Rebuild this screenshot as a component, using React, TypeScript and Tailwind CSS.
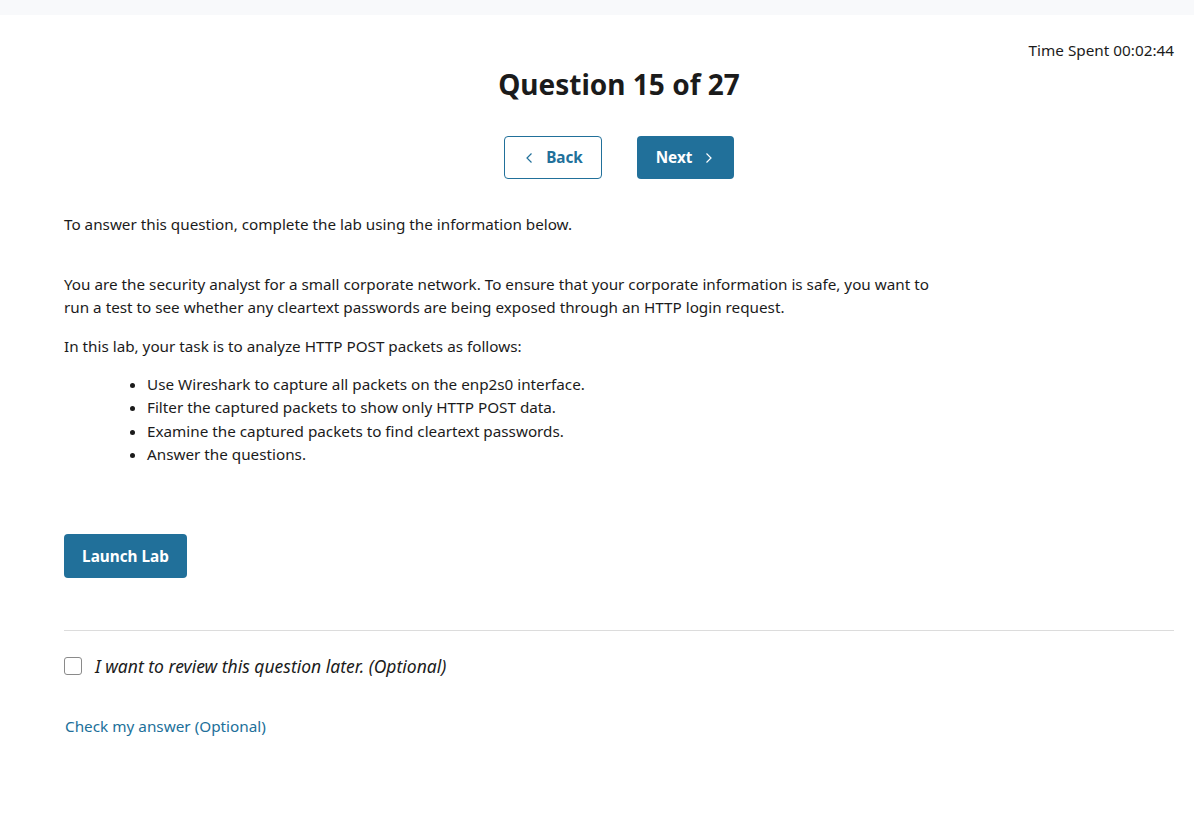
import type { FC } from "react";

const ChevronLeft: FC = () => (
  <svg width="14" height="14" viewBox="0 0 14 14" fill="none" stroke="currentColor" strokeWidth="1.2">
    <path d="M8.5 2.5 4 7l4.5 4.5" />
  </svg>
);

const ChevronRight: FC = () => (
  <svg width="14" height="14" viewBox="0 0 14 14" fill="none" stroke="currentColor" strokeWidth="1.2">
    <path d="M5.5 2.5 10 7l-4.5 4.5" />
  </svg>
);

const steps = [
  "Use Wireshark to capture all packets on the enp2s0 interface.",
  "Filter the captured packets to show only HTTP POST data.",
  "Examine the captured packets to find cleartext passwords.",
  "Answer the questions.",
];

export default function App() {
  return (
    <div className="min-h-[814px] bg-white text-[#1b1b1b]" style={{ fontFamily: '"Noto Sans", "Open Sans", sans-serif' }}>
      <div className="h-[15px] bg-[#f8f9fb]" />
      <div className="pl-[64px] pr-[20px]">
        <div className="flex justify-end pt-[25px] text-[15.3px] leading-[20px]">Time Spent 00:02:44</div>
        <h1 className="mt-[6px] text-center text-[28px] font-bold leading-[36px] text-[#1b1b1b]">Question 15 of 27</h1>
        <div className="mt-[34px] flex justify-center gap-[35px]">
          <button className="flex h-[43px] w-[98px] items-center justify-center gap-[9px] rounded-[4px] border border-[#21709a] bg-white text-[15.3px] font-bold text-[#21709a]">
            <ChevronLeft />
            <span>Back</span>
          </button>
          <button className="flex h-[43px] w-[97px] items-center justify-center gap-[9px] rounded-[4px] bg-[#21709a] text-[15.3px] font-bold text-white">
            <span>Next</span>
            <ChevronRight />
          </button>
        </div>

        <p className="mt-[34px] text-[15.25px] leading-[23px]">To answer this question, complete the lab using the information below.</p>

        <div className="mt-[37px] max-w-[875px] text-[15.25px] leading-[23px]">
          <p>
            You are the security analyst for a small corporate network. To ensure that your corporate information is safe, you want to run a test to see whether any cleartext passwords are being exposed through an HTTP login request.
          </p>
          <p className="mt-[16px]">In this lab, your task is to analyze HTTP POST packets as follows:</p>
          <ul className="mt-[15px] list-disc pl-[83px] leading-[23.3px]">
            {steps.map((s) => (
              <li key={s}>{s}</li>
            ))}
          </ul>
        </div>

        <button className="mt-[68px] h-[44px] w-[123px] rounded-[4px] bg-[#21709a] text-[15.3px] font-bold text-white">Launch Lab</button>

        <div className="mt-[52px] border-t border-[#dcdcdc]" />

        <label className="mt-[23px] flex items-center gap-[13px]">
          <span className="block h-[18px] w-[18px] rounded-[3px] border border-[#8a8a8a] bg-white" />
          <span className="text-[17.5px] italic leading-[24px]">I want to review this question later. (Optional)</span>
        </label>

        <a className="mt-[38px] block pl-[1px] text-[15.3px] leading-[20px] text-[#21709a]">Check my answer (Optional)</a>
      </div>
    </div>
  );
}
